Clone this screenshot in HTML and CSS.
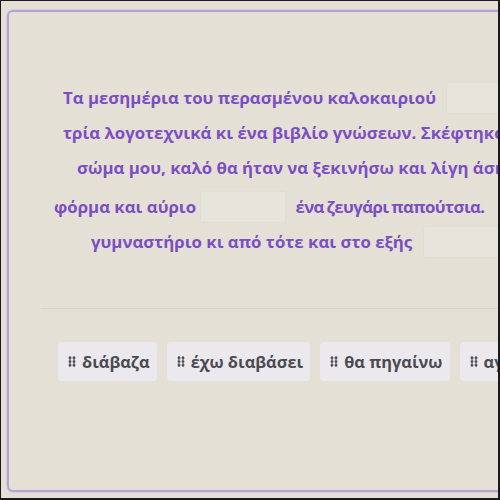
FILE: index.html
```html
<!DOCTYPE html>
<html lang="el">
<head>
<meta charset="utf-8">
<link rel="stylesheet" href="styles.css">
</head>
<body>
<div class="frame">
  <div class="card">
    <div class="passage">
      <div class="line l1">Τα μεσημέρια του περασμένου καλοκαιριού <span class="blank w-long"></span></div>
      <div class="line l2">τρία λογοτεχνικά κι ένα βιβλίο γνώσεων. Σκέφτηκα πως για το</div>
      <div class="line l3">σώμα μου, καλό θα ήταν να ξεκινήσω και λίγη άσκηση</div>
      <div class="line l4">φόρμα και αύριο <span class="blank w-mid"></span> <span class="tight">ένα ζευγάρι παπούτσια.</span></div>
      <div class="line l5">γυμναστήριο κι από τότε και στο εξής <span class="blank w-long"></span></div>
    </div>
    <div class="divider"></div>
    <div class="chips">
      <div class="chip"><span class="grip"></span>διάβαζα</div>
      <div class="chip"><span class="grip"></span>έχω διαβάσει</div>
      <div class="chip"><span class="grip"></span>θα πηγαίνω</div>
      <div class="chip"><span class="grip"></span>αγόρασα</div>
    </div>
  </div>
</div>
</body>
</html>
```

FILE: styles.css
```css
html, body {
  margin: 0;
  padding: 0;
  background: #e4e0d6;
}
.frame {
  width: 500px;
  height: 500px;
  box-sizing: border-box;
  border: 1px solid #1a1a1a;
  border-right-width: 2px;
  border-bottom-width: 2px;
  overflow: hidden;
  padding: 9px 0 0 6px;
  font-family: "Open Sans", "Noto Sans", sans-serif;
}
.card {
  width: 560px;
  height: 482px;
  box-sizing: border-box;
  border: 2px solid #b5a4d3;
  border-radius: 6px;
  background: #e4e0d6;
  box-shadow: 0 0 0 1px #d6cfe0;
}
.passage {
  padding-top: 68px;
  color: #7b4ec3;
  font-weight: 700;
  font-size: 16.8px;
}
.line {
  height: 35px;
  display: flex;
  align-items: center;
  white-space: pre;
}
.l1 { padding-left: 54px; }
.l2 { padding-left: 54px; }
.l3 { padding-left: 68px; }
.l4 { padding-left: 45px; margin-top: 4px; }
.l5 { padding-left: 82px; }
.tight { letter-spacing: -0.6px; word-spacing: -1px; }
.blank {
  display: inline-block;
  height: 30px;
  background: #e7e4dc;
  border: 1px solid #e0dcd2;
  border-radius: 3px;
  margin: 0 8px 0 6px;
}
.w-long { width: 110px; }
.w-mid { width: 84px; margin: 0 9px 0 0; }
.divider {
  height: 1px;
  background: #d8d4c9;
  margin: 49px 0 0 32px;
}
.chips {
  display: flex;
  gap: 10px;
  padding: 33px 0 0 49px;
}
.chip {
  flex: none;
  height: 39px;
  box-sizing: border-box;
  padding: 0 7px 0 10px;
  display: flex;
  align-items: center;
  gap: 6px;
  background: #ebe8ee;
  border-radius: 4px;
  color: #4b4b4f;
  font-weight: 700;
  font-size: 16.4px;
  white-space: nowrap;
}
.grip {
  width: 8px;
  height: 11px;
  background-image: radial-gradient(circle, #4b4b4f 1.3px, transparent 1.7px);
  background-size: 4px 3.7px;
  background-position: 0 0;
}
```
